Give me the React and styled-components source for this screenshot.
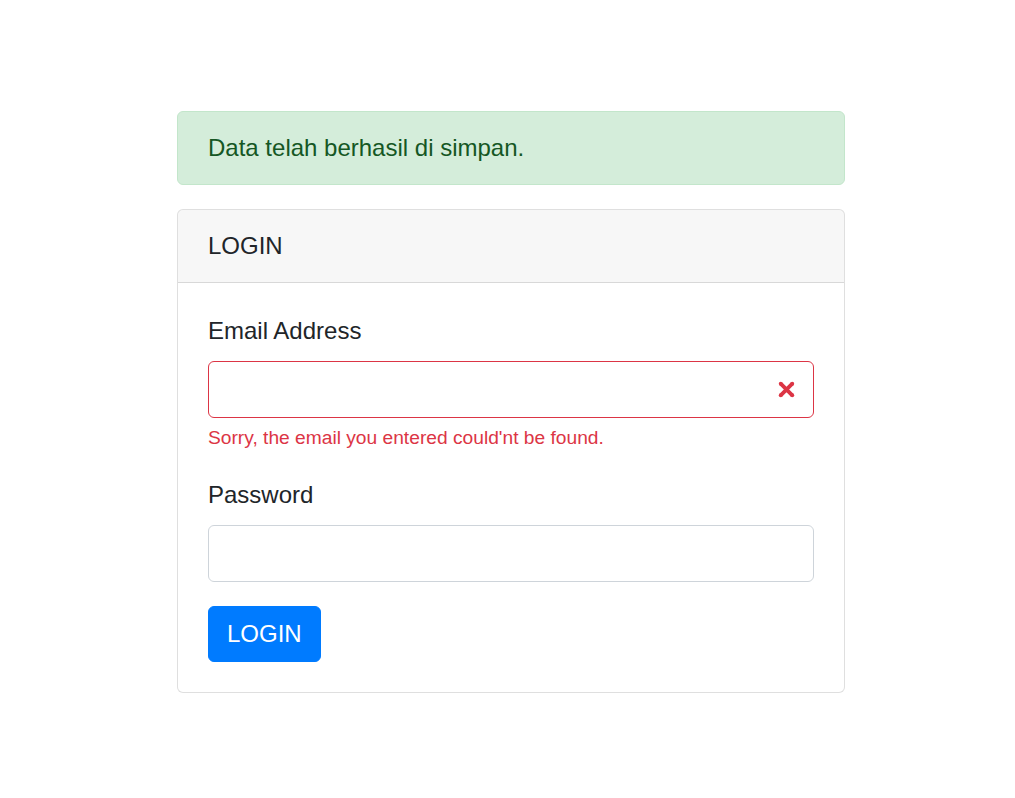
import React from "react";
import styled, { createGlobalStyle } from "styled-components";

const GlobalStyle = createGlobalStyle`
  body {
    margin: 0;
    background: #fff;
    font-family: "Segoe UI", "Liberation Sans", Arial, sans-serif;
    color: #212529;
  }
  * {
    box-sizing: border-box;
  }
`;

const Page = styled.div`
  padding: 111px 0 40px 177px;
`;

const Column = styled.div`
  width: 668px;
`;

const Alert = styled.div`
  background: #d4edda;
  border: 1px solid #c3e6cb;
  border-radius: 6px;
  color: #155724;
  padding: 18px 30px;
  font-size: 24px;
  line-height: 36px;
  margin-bottom: 24px;
`;

const Card = styled.div`
  border: 1px solid rgba(0, 0, 0, 0.125);
  border-radius: 6px;
  background: #fff;
  overflow: hidden;
`;

const CardHeader = styled.div`
  background: rgba(0, 0, 0, 0.03);
  border-bottom: 1px solid rgba(0, 0, 0, 0.125);
  padding: 18px 30px;
  font-size: 24px;
  line-height: 36px;
`;

const CardBody = styled.form`
  padding: 30px;
`;

const FormGroup = styled.div`
  margin-bottom: 24px;
`;

const Label = styled.label`
  display: block;
  font-size: 24px;
  line-height: 36px;
  margin-bottom: 12px;
`;

const InputWrap = styled.div`
  position: relative;
`;

const Input = styled.input`
  display: block;
  width: 100%;
  height: 57px;
  padding: 9px ${(p) => (p.$invalid ? "54px" : "18px")} 9px 18px;
  font-family: inherit;
  font-size: 24px;
  line-height: 36px;
  color: #495057;
  background: #fff;
  border: 1px solid ${(p) => (p.$invalid ? "#dc3545" : "#ced4da")};
  border-radius: 6px;
  outline: none;
`;

const InvalidIcon = styled.svg`
  position: absolute;
  right: 14px;
  top: 50%;
  width: 27px;
  height: 27px;
  margin-top: -13.5px;
`;

const Feedback = styled.div`
  margin-top: 6px;
  font-size: 19.2px;
  line-height: 28.8px;
  color: #dc3545;
`;

const Button = styled.button`
  display: inline-block;
  height: 56px;
  font-family: inherit;
  font-size: 24px;
  line-height: 36px;
  padding: 9px 18px;
  color: #fff;
  background: #007bff;
  border: 1px solid #007bff;
  border-radius: 6px;
  cursor: pointer;
`;

const App = () => (
  <>
    <GlobalStyle />
    <Page>
      <Column>
        <Alert>Data telah berhasil di simpan.</Alert>
        <Card>
          <CardHeader>LOGIN</CardHeader>
          <CardBody onSubmit={(e) => e.preventDefault()}>
            <FormGroup>
              <Label htmlFor="email">Email Address</Label>
              <InputWrap>
                <Input id="email" type="email" $invalid />
                <InvalidIcon viewBox="-2 -2 7 7" fill="#dc3545">
                  <path stroke="#dc3545" d="M0 0l3 3m0-3L0 3" />
                  <circle r=".5" />
                  <circle cx="3" r=".5" />
                  <circle cy="3" r=".5" />
                  <circle cx="3" cy="3" r=".5" />
                </InvalidIcon>
              </InputWrap>
              <Feedback>Sorry, the email you entered could'nt be found.</Feedback>
            </FormGroup>
            <FormGroup>
              <Label htmlFor="password">Password</Label>
              <Input id="password" type="password" />
            </FormGroup>
            <Button type="submit">LOGIN</Button>
          </CardBody>
        </Card>
      </Column>
    </Page>
  </>
);

export default App;
